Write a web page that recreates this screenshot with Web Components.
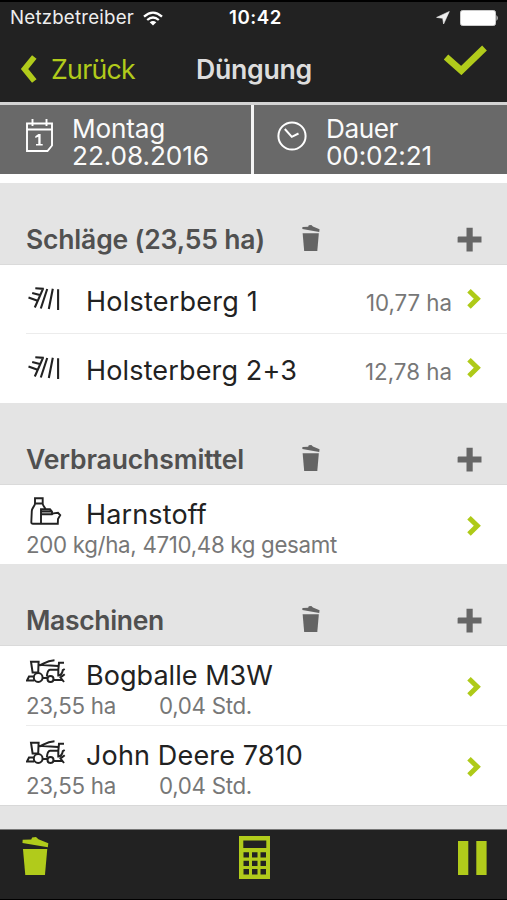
<!DOCTYPE html>
<html lang="de">
<head>
<meta charset="utf-8">
<title>Düngung</title>
<style>
html,body{margin:0;background:#000}
body{width:507px;height:900px;overflow:hidden;font-family:Inter,"Liberation Sans",sans-serif;font-optical-sizing:none}
</style>
</head>
<body>
<duengung-app></duengung-app>
<script>
const define = (name, html, setup) => customElements.define(name, class extends HTMLElement {
  connectedCallback() {
    if (this.shadowRoot) return;
    this.attachShadow({ mode: 'open' }).innerHTML = typeof html === 'function' ? html(this) : html;
    if (setup) setup(this, this.shadowRoot);
  }
});

const ICONS = {
  wifi: [20, 15, '<g fill="none" stroke="#fff" stroke-width="2.3"><path d="M1 5.6Q10-2.4 19 5.6"/><path d="M4.2 9Q10 4 15.8 9"/></g><path d="M6.7 11.2Q10 8.6 13.3 11.2L10 14.6z" fill="#fff"/>'],
  location: [14, 14, '<path d="M13.3.5 7.6 13 6.7 7.3.6 6.4z" fill="#eee" stroke="#eee" stroke-width=".6"/>'],
  battery: [39, 16, '<rect x=".5" y=".5" width="35" height="15" rx="2" fill="#fff" stroke="#ccc"/><path d="M36.5 5q2.5 3 0 6z" fill="#ddd"/>'],
  back: [17, 28, '<path d="M14.3 2 4.6 14l9.7 12" fill="none" stroke="#b1cb1b" stroke-width="5.8"/>'],
  check: [43, 30, '<path d="M2 12 17.3 25.5 40.5 3" fill="none" stroke="#b1cb1b" stroke-width="6.8"/>'],
  calendar: [27, 33, '<g fill="none" stroke="#fff" stroke-width="1.9"><path d="M1 4.5H26V26.5L21.5 32H1zM1 10.5H26M6.5 0V7M20.5 0V7"/></g><path d="M9.3 17.2 12.4 15H14.6V25H16.7V26.6H10V25H12.3V17.8L9.3 19z" fill="#fff"/>'],
  clock: [30, 30, '<g fill="none" stroke="#fff" stroke-width="2"><circle cx="15" cy="15" r="13.6"/><path d="M7.8 8 14.8 15.8 21.5 12.5"/></g>'],
  trash: [28, 38, '<g fill="currentColor"><path d="M.7 2.8 9.6 2.4 10.5.5 14.5 0 17 2.3 27.3 6.2 26.8 10.2 .5 6z"/><path d="M1 12H26.2L23.8 38H3.4z"/></g>'],
  plus: [25, 25, '<path d="M9.5.7H15.7V9.5H24.5V15.5H15.7V24.5H9.5V15.5H.6V10.2L1.4 9.5H9.5z" fill="#666"/>'],
  next: [16, 22, '<path d="M3 2.7 11.3 10.8 3 19" fill="none" stroke="#aeca18" stroke-width="5"/>'],
  field: [32, 24, '<g fill="none" stroke="#222" stroke-width="2.1"><path d="M30.1 2.3V23M24.8 1.8 20.8 22M19.2 2 12.8 21.5M15.2 1.3 6.8 20.5M7.3 1.3 15.8 1.9M4.2 6 12.8 8.2M.5 10.6 9.6 13.8"/></g>'],
  supply: [32, 29, '<g fill="none" stroke="#222" stroke-width="1.9"><path d="M5 1.3H12.7V6.5H5zM5 6.5C5 9 1.8 11 1.8 14L1.3 25.3Q1.3 26.8 3 26.8H27.8L28 22 30.2 18.2 28 15.8 23.5 16.3 22 17.3H11V26.8M12.7 6.5C12.7 9 15 10 15.5 12M11 17V12.3H20L22 14.5V17M11 14.5H21"/></g>'],
  harvester: [40, 25, '<g fill="none" stroke="#222" stroke-width="2"><path d="M5 2.7H12.6L12.2 13.5H6.6zM13.5 6.5C19 4 21 1.7 28.5 1.2M13 5.8 32 7M38 3.8H33L32.3 10.8H24Q21.5 11 20.8 17.5M32.3 10.8V16.5Q35.8 16.5 36.8 11.2L38.7 10M38.7 15.2 34.5 18.5 38 23M7.5 17.5H3L1 21.5H8M16.8 19H21M27.5 21H36"/><circle cx="12.2" cy="18.5" r="4.4"/><circle cx="24.5" cy="19.9" r="3"/></g>'],
  calculator: [31, 43, '<path fill="#b1cb1b" fill-rule="evenodd" d="M0 0H31V43H0zM4.3 4.5V12H27.3V4.5zM4.5 16.3V21.5H10V16.3zM13 16.3V21.5H18.5V16.3zM21.5 16.3V21.5H27V16.3zM4.5 24.8V30H10V24.8zM13 24.8V30H18.5V24.8zM21.5 24.8V30H27V24.8zM4.5 33V38.5H10V33zM13 33V38.5H18.5V33zM21.5 33V38.5H27V33z"/>'],
  pause: [29, 34, '<path fill="#b1cb1b" d="M0 0H10.3V34H0zM18.3 0H28.6V34H18.3z"/>']
};

define('ui-icon', el => {
  const [w, h, body] = ICONS[el.getAttribute('name')];
  const width = el.getAttribute('width') || w, height = el.getAttribute('height') || h;
  return `<style>:host{display:block;flex:none;width:${width}px;height:${height}px}svg{display:block}</style>
  <svg width="${width}" height="${height}" viewBox="0 0 ${w} ${h}" preserveAspectRatio="none">${body}</svg>`;
});

/* One line of text, tracked so that it fills the given width. */
define('ui-text', '<style>:host{display:block;white-space:nowrap}span{display:inline-block}</style><span><slot></slot></span>', (el, root) => {
  const w = parseFloat(el.getAttribute('w')), span = root.querySelector('span');
  const spacing = (w - span.getBoundingClientRect().width) / el.textContent.length;
  span.style.letterSpacing = spacing.toFixed(3) + 'px';
});

define('status-bar', `<style>:host{display:grid;grid-template-columns:1fr auto 1fr;align-items:center;height:33px;padding:1px 8px 0 10px;box-sizing:border-box;background:#222;color:#eee;font-size:18.7px;line-height:22px;border-top:2px solid #000}
.l,.r{display:flex;align-items:center}.l{gap:9px}.r{justify-content:flex-end;gap:10px}.time{font-weight:600;color:#fff;padding-left:2px}</style>
<div class="l"><ui-text w="124">Netzbetreiber</ui-text><ui-icon name="wifi"></ui-icon></div>
<ui-text class="time" w="53">10:42</ui-text>
<div class="r"><ui-icon name="location"></ui-icon><ui-icon name="battery"></ui-icon></div>`);

define('nav-bar', `<style>:host{display:grid;grid-template-columns:1fr auto 1fr;height:69px;padding:0 20px;background:#222;font-size:26.7px;line-height:32px}
.back{display:flex;gap:14px;color:#b1cb1b;padding-top:20px}.title{font-weight:600;color:#ddd;padding:20px 0 0 1px}.ok{display:flex;justify-content:flex-end;padding-top:12px}
.back ui-icon{margin-top:2px}</style>
<div class="back"><ui-icon name="back"></ui-icon><ui-text w="84">Zurück</ui-text></div>
<div class="title"><ui-text w="116">Düngung</ui-text></div>
<div class="ok"><ui-icon name="check"></ui-icon></div>`);

define('info-tile', `<style>:host{display:flex;box-sizing:border-box;height:69px;padding:10px 0 0 0;background:#696969;color:#fafafa;font-size:26.2px;line-height:27px}
.i{flex:none;width:72px;padding-left:23px;box-sizing:border-box}</style><div class="i"><slot name="icon"></slot></div><div><slot></slot></div>`);

define('section-head', `<style>:host{display:grid;grid-template-columns:276px 155px auto;box-sizing:border-box;height:82px;padding:40px 0 0 26px;background:#e4e4e4;color:#505050;font-size:26.5px;font-weight:600;line-height:32px;border-bottom:1px solid #dadada}
.t{color:#646464;padding-top:2px}.p{padding-top:4px}</style>
<slot></slot><ui-icon class="t" name="trash" width="18" height="26"></ui-icon><ui-icon class="p" name="plus"></ui-icon>`);

define('list-row', `<style>:host{display:grid;grid-template-columns:1fr auto 41px;height:69px;background:#fff;color:#222;align-items:center}
:host([tall]){height:80px}:host([last]){height:79px}
:host([line]){background:linear-gradient(#ececec,#ececec) 26px 100%/100% 1px no-repeat #fff}
.main{padding-left:26px;padding-top:4px}:host([tall]) .main{padding-top:5px}:host([last]) .main{padding-top:7px}
.head{display:grid;grid-template-columns:60px 1fr;font-size:27px;line-height:33px;align-items:center}
.sub{display:flex;font-size:22.3px;line-height:27px;color:#777}
.end{font-size:22.3px;line-height:28px;color:#777;padding-top:6px;padding-right:14px}
.next{margin-top:-1px}:host([tall]) .next{margin-top:2px}</style>
<div class="main"><div class="head"><div><slot name="icon"></slot></div><slot></slot></div><div class="sub"><slot name="sub"></slot></div></div>
<div class="end"><slot name="end"></slot></div><ui-icon class="next" name="next"></ui-icon>`);

define('tool-bar', `<style>:host{display:grid;grid-template-columns:1fr auto 1fr;box-sizing:border-box;height:70px;padding:6px 20px 0 22px;background:#222;border-top:1px solid #777;color:#b1cb1b}
.t{padding-top:1px}.p{padding-top:5px;justify-self:end}</style>
<ui-icon class="t" name="trash" width="27" height="38"></ui-icon><ui-icon name="calculator"></ui-icon><ui-icon class="p" name="pause"></ui-icon>`);

define('duengung-app', `<style>:host{display:flex;flex-direction:column;width:507px;height:900px;background:#e4e4e4}
.tiles{display:grid;grid-template-columns:251px 253px;gap:3px;background:#f4f4f4;border-top:3px solid #d4d4d4}
.gap{height:9px;background:#fff}.fill{height:24px;box-sizing:border-box;border-top:1px solid #d8d8d8}
.field{margin:-5px 0 0 2px}.supply{margin:-7px 0 0 4px}.harv{margin-top:-7px}.second{margin-left:43px}.cal{margin:4px 0 0 3px}.clk{margin-top:6px}
.bottom{height:1px;background:#000}</style>
<status-bar></status-bar><nav-bar></nav-bar>
<div class="tiles">
<info-tile><ui-icon slot="icon" class="cal" name="calendar"></ui-icon><ui-text w="93">Montag</ui-text><ui-text w="137">22.08.2016</ui-text></info-tile>
<info-tile><ui-icon slot="icon" class="clk" name="clock"></ui-icon><ui-text w="72">Dauer</ui-text><ui-text w="106">00:02:21</ui-text></info-tile>
</div><div class="gap"></div>
<section-head><ui-text w="239">Schläge (23,55 ha)</ui-text></section-head>
<list-row line><ui-icon slot="icon" class="field" name="field"></ui-icon><ui-text w="172">Holsterberg 1</ui-text><ui-text slot="end" w="86">10,77 ha</ui-text></list-row>
<list-row><ui-icon slot="icon" class="field" name="field"></ui-icon><ui-text w="211">Holsterberg 2+3</ui-text><ui-text slot="end" w="87">12,78 ha</ui-text></list-row>
<section-head><ui-text w="218">Verbrauchsmittel</ui-text></section-head>
<list-row tall last><ui-icon slot="icon" class="supply" name="supply"></ui-icon><ui-text w="121">Harnstoff</ui-text><ui-text slot="sub" w="311">200 kg/ha, 4710,48 kg gesamt</ui-text></list-row>
<section-head><ui-text w="138">Maschinen</ui-text></section-head>
<list-row tall line><ui-icon slot="icon" class="harv" name="harvester"></ui-icon><ui-text w="187">Bogballe M3W</ui-text><ui-text slot="sub" w="90">23,55 ha</ui-text><ui-text slot="sub" class="second" w="93">0,04 Std.</ui-text></list-row>
<list-row tall last><ui-icon slot="icon" class="harv" name="harvester"></ui-icon><ui-text w="217">John Deere 7810</ui-text><ui-text slot="sub" w="90">23,55 ha</ui-text><ui-text slot="sub" class="second" w="93">0,04 Std.</ui-text></list-row>
<div class="fill"></div><tool-bar></tool-bar><div class="bottom"></div>`);
</script>
</body>
</html>
